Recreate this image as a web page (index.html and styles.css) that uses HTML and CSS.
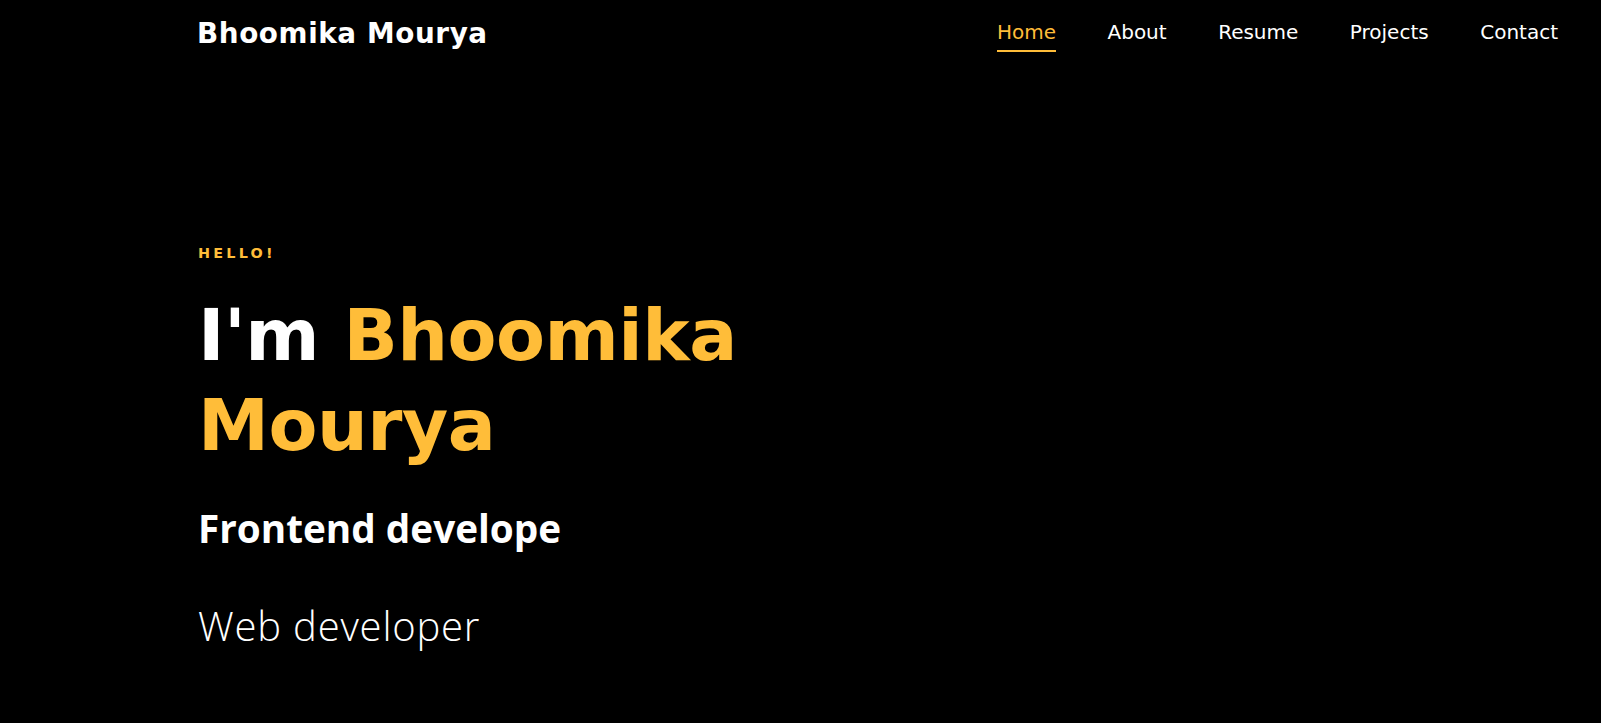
FILE: index.html
```html
<!DOCTYPE html>
<html lang="en">
<head>
<meta charset="utf-8">
<title>Bhoomika Mourya</title>
<link rel="stylesheet" href="styles.css">
</head>
<body>
<header class="topbar">
  <a class="brand" href="#">Bhoomika Mourya</a>
  <nav class="menu">
    <a class="menu-link active" href="#">Home</a>
    <a class="menu-link" href="#">About</a>
    <a class="menu-link" href="#">Resume</a>
    <a class="menu-link" href="#">Projects</a>
    <a class="menu-link" href="#">Contact</a>
  </nav>
</header>
<main class="hero">
  <p class="subheading">Hello!</p>
  <h1 class="title"><span class="lead">I'm</span> <span class="accent">Bhoomika</span> <span class="accent">Mourya</span></h1>
  <h2 class="role">Frontend develope</h2>
  <p class="role-alt">Web developer</p>
</main>
</body>
</html>
```

FILE: styles.css
```css
* { box-sizing: border-box; }
html, body {
  margin: 0;
  padding: 0;
  background: #000;
  color: #fff;
}
body {
  font-family: "DejaVu Sans", sans-serif;
  min-height: 723px;
}
a { text-decoration: none; }

.topbar {
  display: flex;
  justify-content: space-between;
  align-items: flex-start;
  padding: 20px 43px 0 197px;
}
.brand {
  font-family: "DejaVu Sans", sans-serif;
  font-weight: 700;
  font-size: 27.8px;
  line-height: 1;
  color: #fff;
  letter-spacing: 0.6px;
}
.menu {
  display: flex;
  gap: 51.5px;
  margin-top: 2px;
}
.menu-link {
  font-family: "DejaVu Sans", sans-serif;
  font-size: 20px;
  line-height: 1;
  color: #fff;
  padding-bottom: 8.4px;
  border-bottom: 2px solid transparent;
}
.menu-link.active {
  color: #ffbd39;
  border-bottom-color: #ffbd39;
}

.hero {
  padding: 0 0 0 198px;
}
.subheading {
  margin: 0;
  padding-top: 190.7px;
  font-family: "DejaVu Sans", sans-serif;
  font-weight: 700;
  font-size: 14.4px;
  line-height: 20px;
  letter-spacing: 3.2px;
  text-transform: uppercase;
  color: #ffbd39;
}
.title {
  margin: 27.6px 0 0;
  font-family: "DejaVu Sans", sans-serif;
  font-weight: 700;
  font-size: 71.3px;
  line-height: 90px;
  letter-spacing: -0.5px;
  width: 600px;
  color: #fff;
}
.accent { color: #ffbd39; }
.role {
  margin: 34.3px 0 0;
  font-family: "Open Sans", sans-serif;
  font-weight: 700;
  font-size: 38.7px;
  line-height: 1.2;
  color: #fff;
}
.role-alt {
  margin: 51px 0 0;
  font-family: "Open Sans", sans-serif;
  font-weight: 300;
  font-size: 40px;
  line-height: 1.2;
  letter-spacing: 0.8px;
  color: #fff;
}
```
